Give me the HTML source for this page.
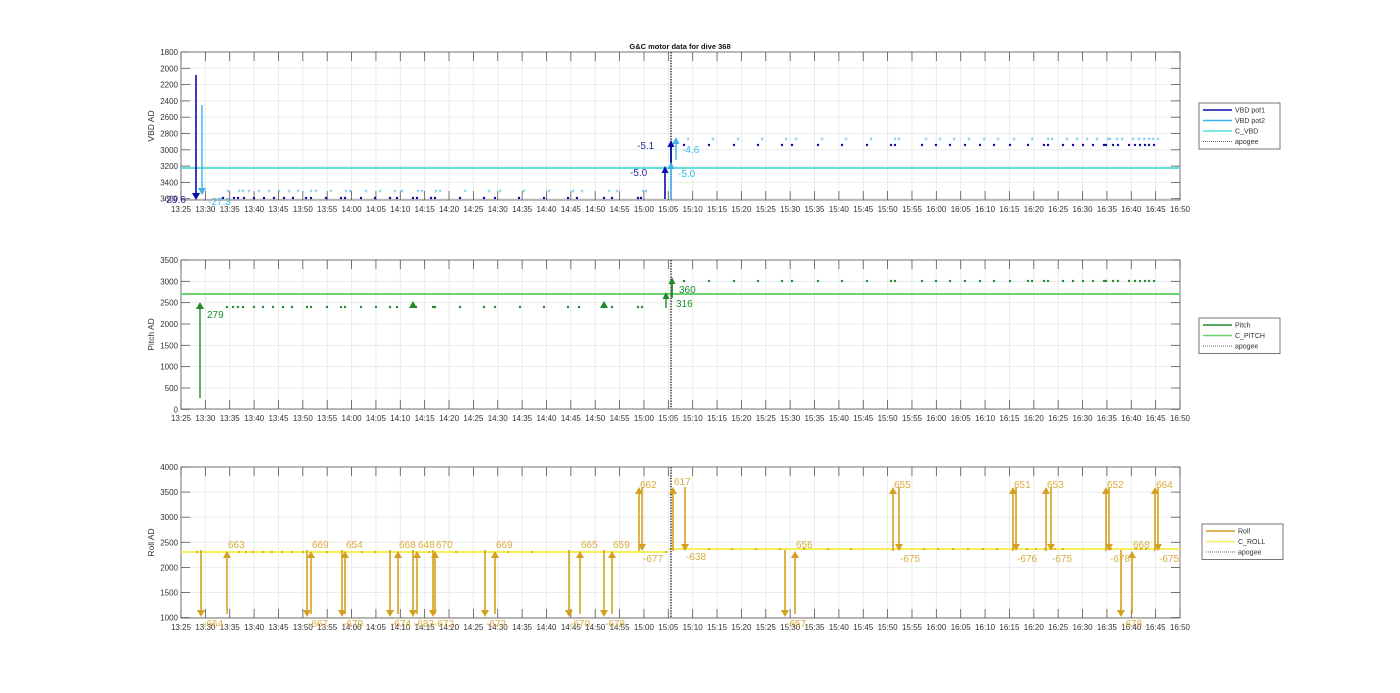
<!DOCTYPE html>
<html><head><meta charset="utf-8"><style>
html,body{margin:0;padding:0;background:#fff;width:1400px;height:693px;overflow:hidden}
svg{display:block;font-family:"Liberation Sans",Arial,sans-serif}
</style></head><body>
<svg id="s" width="1400" height="693" xmlns="http://www.w3.org/2000/svg"></svg>
<script>
const S=document.getElementById('s');let h='';
const X0=181,X1=1180;const X=m=>X0+m*(X1-X0)/205;
function axes(top,bot,ylabels,yfn,ylab,ylabX){
  for(let i=0;i<=41;i++){const x=X(i*5);h+=`<line x1="${x}" y1="${top}" x2="${x}" y2="${bot}" stroke="#ebebeb" stroke-width="1"/>`;}
  ylabels.forEach(v=>{const y=yfn(v);h+=`<line x1="${X0}" y1="${y}" x2="${X1}" y2="${y}" stroke="#ebebeb"/>`;});
  for(let i=0;i<=41;i++){const x=X(i*5);h+=`<line x1="${x}" y1="${top}" x2="${x}" y2="${top+9}" stroke="#555" stroke-width="0.8"/><line x1="${x}" y1="${bot}" x2="${x}" y2="${bot-9}" stroke="#555" stroke-width="0.8"/>`;
    const m=805+i*5;const hh=Math.floor(m/60),mm=m%60;
    h+=`<text x="${x}" y="${bot+12}" font-size="8" fill="#333" text-anchor="middle">${hh}:${String(mm).padStart(2,'0')}</text>`;}
  ylabels.forEach(v=>{const y=yfn(v);h+=`<line x1="${X0}" y1="${y}" x2="${X0+9}" y2="${y}" stroke="#555" stroke-width="0.8"/><line x1="${X1}" y1="${y}" x2="${X1-9}" y2="${y}" stroke="#555" stroke-width="0.8"/><text x="${X0-3}" y="${y+3}" font-size="8" fill="#333" text-anchor="end">${v}</text>`;});
  h+=`<rect x="${X0}" y="${top}" width="${X1-X0}" height="${bot-top}" fill="none" stroke="#555" stroke-width="0.8"/>`;
  const cy=(top+bot)/2;h+=`<text transform="translate(${ylabX},${cy}) rotate(-90)" font-size="8.5" fill="#333" text-anchor="middle">${ylab}</text>`;
}
function arrow(x,y1,y2,c,w,hw){
  const d=y2<y1?1:-1;const hl=7;
  h+=`<line x1="${x}" y1="${y1}" x2="${x}" y2="${y2+d*hl}" stroke="${c}" stroke-width="${w}"/>`;
  h+=`<polygon points="${x},${y2} ${x-hw},${y2+d*hl} ${x+hw},${y2+d*hl}" fill="${c}"/>`;
}
function txt(x,y,t,c,fs){h+=`<text x="${x}" y="${y}" font-size="${fs||10}" fill="${c}">${t}</text>`;}
function dot(x,y,c,r){h+=`<circle cx="${x}" cy="${y}" r="${r||1.2}" fill="${c}"/>`;}
function star(x,y,c){h+=`<text x="${x}" y="${y+3.5}" font-size="8" fill="${c}" text-anchor="middle">*</text>`;}
function apogee(top,bot){h+=`<line x1="671" y1="${top}" x2="671" y2="${bot}" stroke="#444" stroke-width="1.6" stroke-dasharray="1.5,1.2"/>`;}
function legend(x,y,w,items){
  h+=`<rect x="${x}" y="${y}" width="${w}" height="${items.length*10.5+4}" fill="#fff" stroke="#555" stroke-width="0.8"/>`;
  items.forEach((it,i)=>{const yy=y+7+i*10.5;
    h+=`<line x1="${x+4}" y1="${yy}" x2="${x+33}" y2="${yy}" stroke="${it[1]}" stroke-width="${it[2]}" ${it[3]?'stroke-dasharray="1,1"':''}/>`;
    h+=`<text x="${x+36}" y="${yy+2.5}" font-size="7" fill="#333">${it[0]}</text>`;});
}
const YV=v=>52+(v-1800)*0.0815;
axes(52,200,[1800,2000,2200,2400,2600,2800,3000,3200,3400,3600],YV,'VBD AD',154);
h+=`<text x="680" y="49" font-size="7.5" font-weight="bold" fill="#111" text-anchor="middle">G&amp;C motor data for dive 368</text>`;
h+=`<line x1="${X0}" y1="168" x2="${X1}" y2="168" stroke="#5fe0dc" stroke-width="2"/>`;
const DB='#0a0aa8',LB='#3cb4ec';
[223,234,238,244,254,264,274,284,293,306,311,326,341,345,361,375,390,397,413,417,431,435,460,484,495,519,544,568,577,604,612,638,641].forEach(x=>{dot(x,198,DB);star(x+5,192,LB);});
[684,709,734,758,782,792,818,842,867,891,895,922,936,950,965,980,994,1010,1028,1044,1048,1063,1073,1083,1093,1104,1106,1113,1118,1129,1135,1140,1145,1149,1154].forEach(x=>{dot(x,145,DB);star(x+4,140,LB);});
apogee(52,200);
arrow(196,75,200,DB,1.6,4);arrow(202,105,195,LB,1.4,4);
txt(163,203,'-29.6','#2a2aa0',10);txt(208,205,'-27.3',LB,10);
arrow(665,199,166,DB,1.6,3.5);arrow(671,168,140,DB,1.8,3.5);arrow(671,199,162,LB,1.4,3.5);arrow(676,160,137,LB,1.4,3.5);
txt(630,176,'-5.0','#2a2aa0');txt(637,149,'-5.1','#2a2aa0');txt(678,177,'-5.0',LB);txt(682,153,'-4.6',LB);
legend(1199,103,81,[['VBD pot1',DB,1.5],['VBD pot2',LB,1.5],['C_VBD','#5fe0dc',1.5],['apogee','#333',0.8,1]]);
const YP=v=>260+(3500-v)*0.04266;
axes(260,409,[0,500,1000,1500,2000,2500,3000,3500],YP,'Pitch AD',154);
h+=`<line x1="${X0}" y1="294" x2="${X1}" y2="294" stroke="#6fd06f" stroke-width="2"/>`;
const G='#1f8a2a';
[227,233,238,243,254,263,273,283,292,307,311,327,341,345,361,376,390,397,416,433,435,460,484,495,520,544,568,579,612,638,642].forEach(x=>dot(x,307,G));
[684,709,734,758,782,792,818,842,867,891,895,922,936,950,965,980,994,1010,1028,1032,1044,1048,1063,1073,1083,1093,1104,1106,1113,1118,1129,1135,1140,1145,1149,1154].forEach(x=>dot(x,281,G));
apogee(260,409);
arrow(200,398,302,G,1.4,4);txt(207,318,'279',G);
h+=`<polygon points="413,301 409,308 417,308" fill="${G}"/><polygon points="604,301 600,308 608,308" fill="${G}"/>`;
arrow(666,308,292,G,1.4,3.5);arrow(672,298,277,G,1.8,3.5);
txt(679,293,'360',G);txt(676,307,'316',G);
legend(1199,318,81,[['Pitch',G,1.5],['C_PITCH','#6fd06f',1.5],['apogee','#333',0.8,1]]);
const YR=v=>467+(4000-v)*0.0502;
axes(467,618,[1000,1500,2000,2500,3000,3500,4000],YR,'Roll AD',154);
h+=`<line x1="${X0}" y1="552" x2="668" y2="552" stroke="#f3ee5a" stroke-width="2"/><line x1="668" y1="549" x2="${X1}" y2="549" stroke="#f3ee5a" stroke-width="2"/>`;
const R='#d4a020',RT='#d9ad3e';
[197,239,246,253,263,272,282,292,303,327,362,375,429,456,508,532,666,709,732,756,780,804,828,851,924,938,953,968,983,997,1027,1036,1045,1055,1063,1111,1136,1141,1146].forEach(x=>dot(x,x<668?552:549,R,1));
apogee(467,618);
const Y23=551,Y10=617,Y36=487;
function downB(x){arrow(x,Y23-1,Y10,R,1.6,4);} function upB(x){arrow(x,Y10-3,Y23,R,1.6,4);}
function upT(x){arrow(x,Y23,Y36,R,1.6,4);} function downT(x){arrow(x,Y36,Y23,R,1.6,4);}
downB(201);upB(227);txt(228,548,'663',RT);txt(203,627,'-664',RT);
[[307,311,'669','-667'],[342,345,'654','-679'],[390,398,'668','-674'],[413,417,'648','-683'],[433,435,'670','-672'],[485,495,'669','-672'],[569,580,'665','-670'],[604,612,'659','-678'],[785,795,'656','-657'],[1121,1132,'668','-678']].forEach(p=>{downB(p[0]);upB(p[1]);txt(p[1]+1,548,p[2],RT);txt(p[0]+1,627,p[3],RT);});
[[639,642,'662','-677'],[893,899,'655','-675'],[1013,1016,'651','-676'],[1046,1051,'653','-675'],[1106,1109,'652','-678'],[1155,1158,'664','-675']].forEach(p=>{upT(p[0]);downT(p[1]);txt(p[0]+1,488,p[2],RT);txt(p[1]+1,562,p[3],RT);});
upT(673);txt(674,485,'617',RT);downT(685);txt(686,560,'-638',RT);
legend(1202,524,81,[['Roll',R,1.5],['C_ROLL','#f3ee5a',1.5],['apogee','#333',0.8,1]]);
S.innerHTML=h;
</script>
</body></html>
